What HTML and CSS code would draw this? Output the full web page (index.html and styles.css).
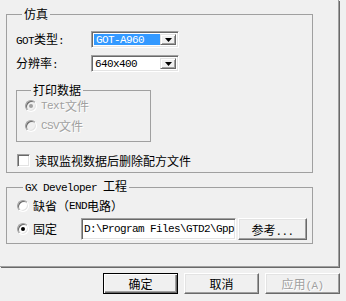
FILE: index.html
```html
<!DOCTYPE html>
<html lang="zh-CN">
<head>
  <meta charset="UTF-8">
  <meta name="viewport" content="width=device-width, initial-scale=1.0">
  <title>仿真</title>
  <link rel="stylesheet" href="styles.css">
</head>
<body>
  <div class="page">

    <fieldset class="group g-sim">
      <legend>仿真</legend>
      <div class="row">
        <label class="lbl"><span class="en">GOT</span>类型<span class="en">:</span></label>
        <div class="combo sunken">
          <span class="combo-text en sel">GOT-A960</span>
          <span class="combo-btn raised">
            <svg width="7" height="4" viewBox="0 0 7 4"><polygon points="0,0 7,0 3.5,4" fill="#000"/></svg>
          </span>
        </div>
      </div>
      <div class="row row-2">
        <label class="lbl">分辨率<span class="en">:</span></label>
        <div class="combo sunken">
          <span class="combo-text en">640x400</span>
          <span class="combo-btn raised">
            <svg width="7" height="4" viewBox="0 0 7 4"><polygon points="0,0 7,0 3.5,4" fill="#000"/></svg>
          </span>
        </div>
      </div>

      <fieldset class="group g-print">
        <legend>打印数据</legend>
        <div class="radio-row disabled"><span class="radio checked"></span><span class="en">Text</span>文件</div>
        <div class="radio-row disabled second"><span class="radio"></span><span class="en">CSV</span>文件</div>
      </fieldset>

      <div class="check-row"><span class="check sunken"></span>读取监视数据后删除配方文件</div>
    </fieldset>

    <fieldset class="group g-gx">
      <legend><span class="en">GX Developer </span>工程</legend>
      <div class="radio-row"><span class="radio"></span>缺省（<span class="en">END</span>电路）</div>
      <div class="path-row">
        <div class="radio-row fixed"><span class="radio checked"></span>固定</div>
        <div class="edit sunken en">D:\Program Files\GTD2\Gpp</div>
        <button class="btn btn-browse">参考<span class="en">...</span></button>
      </div>
    </fieldset>

  </div>

  <div class="buttons">
    <button class="btn btn-main default">确定</button>
    <button class="btn btn-main">取消</button>
    <button class="btn btn-main" disabled>应用<span class="en">(A)</span></button>
  </div>
</body>
</html>
```

FILE: styles.css
```css
* {
  box-sizing: border-box;
  margin: 0;
}

body {
  background-color: #f0f0f0;
  color: #000;
  font-family: "Noto Sans CJK SC", sans-serif;
  font-size: 12px;
  line-height: 14px;
  width: 346px;
  height: 301px;
  overflow: hidden;
}

.en {
  font-family: "Liberation Mono", monospace;
  font-size: 11px;
  letter-spacing: -0.6px;
}

.page {
  width: 339px;
  height: 267px;
  padding: 7px 0 0 6px;
  border-right: 1px solid #a0a0a0;
  border-bottom: 1px solid #a0a0a0;
  box-shadow: 1px 1px 0 #696969;
}

.group {
  border: 1px solid #a0a0a0;
  padding: 0;
  min-width: 0;
}

.group legend {
  margin-left: 6px;
  padding: 0 2px;
  line-height: 14px;
}

.sunken {
  border: 1px solid;
  border-color: #a0a0a0 #fff #fff #a0a0a0;
  box-shadow: inset 1px 1px #696969, inset -1px -1px #e3e3e3;
}

.raised {
  border: 1px solid;
  border-color: #e3e3e3 #696969 #696969 #e3e3e3;
  box-shadow: inset 1px 1px #fff, inset -1px -1px #a0a0a0;
  background-color: #f0f0f0;
}

/* 仿真 */
.g-sim {
  width: 307px;
  height: 166px;
  padding: 10px 0 0 9px;
}

.row {
  display: flex;
  align-items: center;
  height: 17px;
}

.row-2 {
  margin-top: 7px;
}

.lbl {
  width: 75px;
}

.combo {
  width: 88px;
  height: 17px;
  display: flex;
  padding: 2px;
  background-color: #fff;
}

.combo-text {
  flex-grow: 1;
  padding-left: 1px;
  line-height: 13px;
}

.combo-text.sel {
  background-color: #3399ff;
  color: #fff;
  padding-left: 2px;
}

.combo-btn {
  width: 16px;
  display: flex;
  align-items: center;
  justify-content: center;
}

/* 打印数据 */
.g-print {
  width: 135px;
  height: 59px;
  margin-top: 11px;
  padding: 2px 0 0 8px;
}

.radio-row {
  display: flex;
  align-items: center;
  height: 14px;
}

.radio-row.second {
  margin-top: 6px;
}

.radio {
  width: 12px;
  height: 12px;
  flex: none;
  margin-right: 4px;
  border-radius: 50%;
  border: 1px solid;
  border-color: #a0a0a0 #fff #fff #a0a0a0;
  box-shadow: inset 1px 1px #696969, inset -1px -1px #e3e3e3;
  background-color: #fff;
  display: flex;
  align-items: center;
  justify-content: center;
}

.radio.checked::after {
  content: "";
  width: 4px;
  height: 4px;
  border-radius: 50%;
  background-color: #000;
}

.disabled {
  color: #a0a0a0;
  text-shadow: 1px 1px #fff;
}

.disabled .radio {
  background-color: #f0f0f0;
}

.disabled .radio.checked::after {
  background-color: #a0a0a0;
}

.check-row {
  display: flex;
  align-items: center;
  height: 13px;
  margin: 12px 0 0 1px;
}

.check {
  width: 13px;
  height: 13px;
  margin-right: 5px;
  background-color: #fff;
}

/* GX Developer 工程 */
.g-gx {
  width: 307px;
  height: 65px;
  margin-top: 6px;
  padding: 4px 0 0 10px;
}

.path-row {
  display: flex;
  align-items: center;
  height: 22px;
  margin-top: 5px;
}

.radio-row.fixed {
  width: 64px;
}

.edit {
  width: 155px;
  height: 22px;
  padding: 0 2px;
  line-height: 20px;
  background-color: #fff;
  white-space: nowrap;
  overflow: hidden;
}

.btn {
  font-family: inherit;
  font-size: 12px;
  color: #000;
  padding: 0;
  border: 1px solid;
  border-color: #fff #696969 #696969 #fff;
  box-shadow: inset -1px -1px #a0a0a0, inset 1px 1px #e3e3e3;
  background-color: #f0f0f0;
  outline: none;
}

.btn-browse {
  width: 69px;
  height: 22px;
  margin-left: 2px;
}

.btn.default {
  border-color: #000;
  box-shadow: inset 1px 1px #fff, inset -1px -1px #696969, inset -2px -2px #a0a0a0;
}

.btn:disabled {
  color: #a0a0a0;
  text-shadow: 1px 1px #fff;
}

.buttons {
  width: 340px;
  display: flex;
  justify-content: flex-end;
  gap: 6px;
  margin-top: 6px;
}

.btn-main {
  width: 75px;
  height: 21px;
}
```
